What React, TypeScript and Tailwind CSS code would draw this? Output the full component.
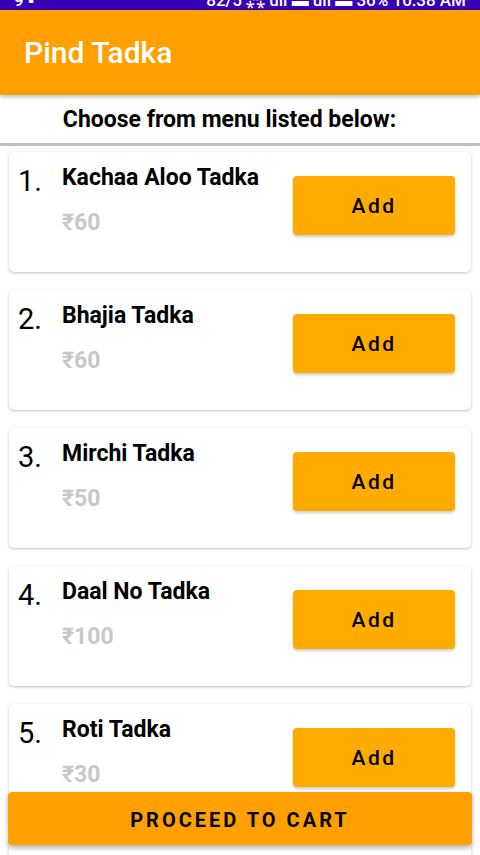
import { FC } from "react";

interface MenuItem {
  name: string;
  price: number;
}

const items: MenuItem[] = [
  { name: "Kachaa Aloo Tadka", price: 60 },
  { name: "Bhajia Tadka", price: 60 },
  { name: "Mirchi Tadka", price: 50 },
  { name: "Daal No Tadka", price: 100 },
  { name: "Roti Tadka", price: 30 },
  { name: "Sev Tameta Tadka", price: 80 },
];

const MenuCard: FC<{ index: number; item: MenuItem }> = ({ index, item }) => {
  return (
    <div className="flex h-[120px] shrink-0 rounded-[5px] bg-white pl-[9px] pr-4 shadow-[0_1px_3px_rgba(0,0,0,0.25)]">
      <div className="w-[44px] pt-[12px] text-[29px] leading-[34px] text-black">
        {index}.
      </div>
      <div className="flex flex-1 flex-col pt-[12px]">
        <span className="text-[23px] font-bold leading-[28px] text-black">
          {item.name}
        </span>
        <span className="mt-[17px] text-[23px] font-bold leading-[28px] text-[#c8c8c8]">
          ₹{item.price}
        </span>
      </div>
      <button className="mt-[24px] h-[59px] w-[162px] rounded-[4px] bg-[#ffab00] pt-[2px] text-[21px] font-medium tracking-[2.5px] text-black shadow-[0_2px_3px_rgba(0,0,0,0.2)]">
        Add
      </button>
    </div>
  );
};

const App: FC = () => {
  return (
    <div
      className="relative flex h-[855px] w-[480px] flex-col overflow-hidden bg-white"
      style={{ fontFamily: "Roboto, 'Liberation Sans', sans-serif" }}
    >
      {/* status bar, mostly cut off */}
      <div className="relative h-[10px] shrink-0 overflow-hidden bg-[#3700b3]">
        <div className="absolute left-0 right-0 top-[-12px] flex justify-between px-[14px] text-[17px] font-medium text-white">
          <span>9 ▪</span>
          <span>82/5 ⁂ ull ▬ ull ▬ 36% 10:38 AM</span>
        </div>
      </div>

      <header className="z-10 flex h-[85px] shrink-0 items-center bg-[#ffa000] px-6 shadow-[0_2px_4px_rgba(0,0,0,0.25)]">
        <h1 className="text-[30px] font-medium text-white">Pind Tadka</h1>
      </header>

      <div className="flex h-[51px] shrink-0 items-center justify-center border-b-[3px] border-[#c0c0c0] pr-[21px] pt-[2px]">
        <span className="text-[23px] font-bold text-black">
          Choose from menu listed below:
        </span>
      </div>

      <div className="flex flex-col gap-[18px] px-[9px] pt-[6px]">
        {items.map((item, i) => (
          <MenuCard key={item.name} index={i + 1} item={item} />
        ))}
      </div>

      <button className="absolute bottom-[10px] left-[8px] right-[8px] h-[53px] rounded-[4px] bg-[#ffa000] pt-[2px] text-[20px] font-bold tracking-[3px] text-black shadow-[0_3px_5px_rgba(0,0,0,0.3)]">
        PROCEED TO CART
      </button>
    </div>
  );
};

export default App;
